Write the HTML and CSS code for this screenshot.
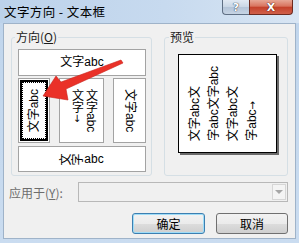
FILE: index.html
```html
<!DOCTYPE html>
<html lang="zh-CN">

<head>
    <meta charset="UTF-8">
    <title>文字方向 - 文本框</title>
    <link rel="stylesheet" href="styles.css">
</head>

<body>
    <div class="window">
        <div class="titlebar">
            <span class="title">文字方向 - 文本框</span>
            <div class="caption-btns">
                <span class="cap help">?</span>
                <span class="cap close">X</span>
            </div>
        </div>

        <div class="client">
            <div class="groups">
                <fieldset class="group dir">
                    <legend>方向(<u>O</u>)</legend>
                    <div class="tile tile-wide">文字abc</div>
                    <div class="tile-row">
                        <div class="tile tall t1 selected"><span class="up">文字abc</span></div>
                        <div class="tile tall t2"><span class="vert">文字abc<br>文字<span class="mark">↓</span></span></div>
                        <div class="tile tall t3"><span class="down">文字abc</span></div>
                    </div>
                    <div class="tile tile-wide bottom">
                        <span class="rot">文</span><span class="rot">字</span>abc
                    </div>
                </fieldset>

                <fieldset class="group preview">
                    <legend>预览</legend>
                    <div class="paper">
                        <span class="pcol">文字abc文</span>
                        <span class="pcol">字abc文字abc</span>
                        <span class="pcol">文字abc文</span>
                        <span class="pcol">字abc<span class="pmark">→</span></span>
                    </div>
                </fieldset>
            </div>

            <div class="apply-row">
                <span class="apply-label">应用于(<u>Y</u>):</span>
                <div class="combo"><span class="drop"><i class="tri"></i></span></div>
            </div>

            <div class="btn-row">
                <button class="btn default">确定</button>
                <button class="btn">取消</button>
            </div>
        </div>

        <!-- red callout arrow drawn over the dialog -->
        <svg class="arrow" width="299" height="243" viewBox="0 0 299 243">
            <polygon points="43,96 56,76 61,82 121,60 123,63 66,89 68,100" fill="#ea3128" stroke="#c8211b" stroke-width="0.6" stroke-linejoin="round" />
        </svg>
    </div>
</body>

</html>
```

FILE: styles.css
```css
* {
    margin: 0;
    padding: 0;
    box-sizing: border-box;
}

body {
    font-family: "Noto Sans CJK SC", sans-serif;
    font-size: 12px;
    color: #1a1a1a;
    background-color: #c6daef;
}

.window {
    position: relative;
    width: 299px;
    height: 243px;
    display: flex;
    flex-direction: column;
    background: linear-gradient(to bottom, #c0d5ec, #cadcf0);
}

.titlebar {
    height: 23px;
    display: flex;
    align-items: center;
    padding-left: 4px;
    background: linear-gradient(90deg, #bcd2ea 0%, #c7daef 55%, #d8e5f3 100%);
}

.title {
    font-size: 12.5px;
    color: #000;
    letter-spacing: 0.4px;
}

.caption-btns {
    display: flex;
    align-self: flex-start;
    margin-left: auto;
    margin-right: 6px;
}

.cap {
    height: 15px;
    display: flex;
    justify-content: center;
    align-items: center;
    font-family: "DejaVu Sans", sans-serif;
    font-weight: bold;
    color: #fff;
    border: 1px solid #5f6f84;
    border-top: none;
}

.help {
    width: 27px;
    font-size: 11px;
    border-radius: 0 0 0 4px;
    border-right: none;
    background: linear-gradient(to bottom, #e1e9f3 0%, #c9d6e5 50%, #b4c4d8 51%, #c6d4e4 100%);
    text-shadow: 0 0 1px #2c3a4c, 0 0 1px #2c3a4c;
}

.close {
    width: 44px;
    font-size: 11px;
    border-color: #6e2a1f;
    border-radius: 0 0 4px 0;
    background: linear-gradient(to bottom, #e7a796 0%, #d8735e 45%, #c4402a 50%, #d0604a 100%);
    text-shadow: 0 0 1px #4a1208, 0 0 1px #4a1208;
}

.client {
    margin: 0 3px;
    border: 1px solid #9fb3c9;
    background-color: #f0f0f0;
    padding: 6px 7px 4px 7px;
}

.groups {
    display: flex;
    gap: 12px;
}

.group {
    border: 1px solid #d5dfe5;
    border-radius: 3px;
    min-width: 0;
}

.group legend {
    line-height: 14px;
    padding: 0 1px;
}

.dir {
    width: 141px;
    padding: 5px 5px 3px 6px;
    display: flex;
    flex-direction: column;
}

.dir legend {
    margin-left: -3px;
}

.tile {
    background-color: #fff;
    border: 1px solid #a3a3a3;
    display: flex;
    justify-content: center;
    align-items: center;
    font-family: "Liberation Sans", "Noto Sans CJK SC", sans-serif;
    font-size: 12px;
    line-height: 13px;
    color: #000;
}

.tile-wide {
    height: 27px;
}

.tile-wide.bottom {
    height: 26px;
    margin-top: 3px;
}

.tile-row {
    display: flex;
    justify-content: space-between;
    margin-top: 2px;
    height: 65px;
}

.t1 {
    width: 32px;
}

.t2 {
    width: 45px;
}

.t3 {
    width: 33px;
}

.selected {
    box-shadow: inset 0 0 0 1px #fff, inset 0 0 0 3px #000;
    outline: 1px dotted #000;
    outline-offset: -5px;
}

.up {
    writing-mode: vertical-rl;
    text-orientation: sideways;
    transform: rotate(180deg);
}

.down {
    writing-mode: vertical-rl;
    text-orientation: sideways;
}

.vert {
    writing-mode: vertical-rl;
    text-orientation: mixed;
    line-height: 13px;
    margin-left: 3px;
}

.mark {
    text-orientation: upright;
    font-family: "DejaVu Sans", sans-serif;
    font-size: 10px;
}

.pmark {
    font-family: "DejaVu Sans", sans-serif;
    font-size: 10px;
}

.rot {
    display: inline-block;
    transform: rotate(-90deg);
}

.preview {
    flex: 1;
    padding: 10px 4px 0 4px;
}

.paper {
    width: 99px;
    height: 99px;
    margin-left: 9px;
    background-color: #fff;
    border: 1px solid #000;
    box-shadow: 2px 2px 0 #6a6a6a;
    display: flex;
    align-items: flex-end;
    gap: 5px;
    padding: 0 0 11px 9px;
}

.pcol {
    writing-mode: vertical-rl;
    text-orientation: sideways;
    transform: rotate(180deg);
    font-family: "Liberation Sans", "Noto Sans CJK SC", sans-serif;
    font-size: 12px;
    line-height: 14px;
    color: #000;
}

.apply-row {
    display: flex;
    align-items: center;
    margin-top: 6px;
    height: 20px;
}

.apply-label {
    width: 69px;
    margin-left: -2px;
    color: #6d6d6d;
}

.combo {
    flex: 1;
    height: 20px;
    border: 1px solid #b8b8b8;
    background-color: #f0f0f0;
    display: flex;
    justify-content: flex-end;
}

.drop {
    width: 14px;
    margin: 1px;
    border: 1px solid #d6d6d6;
    background-color: #f4f4f4;
    display: flex;
    justify-content: center;
    align-items: center;
}

.tri {
    width: 0;
    height: 0;
    border-left: 4px solid transparent;
    border-right: 4px solid transparent;
    border-top: 4px solid #a6a6a6;
}

.btn-row {
    display: flex;
    justify-content: flex-end;
    gap: 11px;
    margin-top: 11px;
}

.btn {
    width: 72px;
    height: 21px;
    border: 1px solid #707070;
    border-radius: 3px;
    background: linear-gradient(to bottom, #f2f2f2 0%, #ebebeb 50%, #dddddd 51%, #cfcfcf 100%);
    font-family: "Noto Sans CJK SC", sans-serif;
    font-size: 12px;
    color: #000;
}

.btn.default {
    width: 73px;
    border-color: #3c7fb1;
    box-shadow: inset 0 0 0 1px #9fdcf7;
}

.arrow {
    position: absolute;
    left: 0;
    top: 0;
    pointer-events: none;
}
```
